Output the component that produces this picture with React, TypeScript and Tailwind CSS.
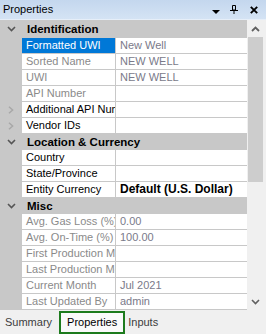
import React from "react";

type Row =
  | { kind: "cat"; label: string }
  | {
      kind: "row";
      label: string;
      value?: string;
      ro?: boolean;
      sel?: boolean;
      exp?: boolean;
      bold?: boolean;
    };

const rows: Row[] = [
  { kind: "cat", label: "Identification" },
  { kind: "row", label: "Formatted UWI", value: "New Well", sel: true },
  { kind: "row", label: "Sorted Name", value: "NEW WELL", ro: true },
  { kind: "row", label: "UWI", value: "NEW WELL", ro: true },
  { kind: "row", label: "API Number", ro: true },
  { kind: "row", label: "Additional API Number", exp: true },
  { kind: "row", label: "Vendor IDs", exp: true },
  { kind: "cat", label: "Location & Currency" },
  { kind: "row", label: "Country" },
  { kind: "row", label: "State/Province" },
  { kind: "row", label: "Entity Currency", value: "Default (U.S. Dollar)", bold: true },
  { kind: "cat", label: "Misc" },
  { kind: "row", label: "Avg. Gas Loss (%)", value: "0.00", ro: true },
  { kind: "row", label: "Avg. On-Time (%)", value: "100.00", ro: true },
  { kind: "row", label: "First Production Month", ro: true },
  { kind: "row", label: "Last Production Month", ro: true },
  { kind: "row", label: "Current Month", value: "Jul 2021", ro: true },
  { kind: "row", label: "Last Updated By", value: "admin", ro: true },
];

function ChevronDown({ color = "#555" }: { color?: string }) {
  return (
    <svg width="9" height="6" viewBox="0 0 9 6">
      <path d="M1 1 L4.5 4.5 L8 1" fill="none" stroke={color} strokeWidth="1.6" />
    </svg>
  );
}

function ChevronRight() {
  return (
    <svg width="6" height="8" viewBox="0 0 6 8">
      <path d="M1 0.8 L4.6 4 L1 7.2" fill="none" stroke="#a8a8a8" strokeWidth="1.5" />
    </svg>
  );
}

function ChevronUp({ color = "#606060" }: { color?: string }) {
  return (
    <svg width="9" height="6" viewBox="0 0 9 6">
      <path d="M1 5 L4.5 1.5 L8 5" fill="none" stroke={color} strokeWidth="1.8" />
    </svg>
  );
}

export default function App() {
  let first = true;
  return (
    <div className="w-[266px] h-[334px] flex flex-col bg-[#f0f0f0] overflow-hidden font-['Liberation_Sans',Arial,sans-serif] text-[11px] text-black">
      {/* title bar */}
      <div className="h-[19px] flex items-center bg-gradient-to-b from-[#c4d7ee] to-[#d4e3f4] pl-[3px]">
        <span className="leading-[19px]">Properties</span>
        <div className="ml-auto flex items-center">
          <svg width="8" height="4" viewBox="0 0 8 4" className="mt-[4px]">
            <path d="M0 0 H8 L4 4 Z" fill="#000" />
          </svg>
          <svg width="8" height="9" viewBox="0 0 8 9" className="ml-[10px]">
            <path d="M2.5 0.5 H5.5 V5 H2.5 Z" fill="none" stroke="#000" strokeWidth="1" />
            <path d="M0 5.5 H8" stroke="#000" strokeWidth="1" />
            <path d="M4 5.5 V9" stroke="#000" strokeWidth="1" />
          </svg>
          <svg width="8" height="8" viewBox="0 0 8 8" className="ml-[12px] mr-[8px]">
            <path d="M0.8 0.8 L7.2 7.2 M7.2 0.8 L0.8 7.2" stroke="#000" strokeWidth="1.9" />
          </svg>
        </div>
      </div>
      <div className="h-[1px] bg-[#e6eef8]" />
      {/* body */}
      <div className="flex h-[290px]">
        <div className="w-[247px] flex flex-col bg-white">
          {rows.map((r, i) => {
            if (r.kind === "cat") {
              const h = first ? "h-[18px]" : "h-[16px]";
              first = false;
              return (
                <div key={i} className={`${h} flex items-center bg-[#c8c8c8] shrink-0`}>
                  <div className="w-[22px] flex justify-center items-center pl-[1px]">
                    <ChevronDown />
                  </div>
                  <span className="pl-[5px] font-bold text-[11.5px] whitespace-nowrap leading-[15px]">
                    {r.label}
                  </span>
                </div>
              );
            }
            return (
              <div key={i} className="h-[16px] flex shrink-0">
                <div className="w-[22px] bg-[#c8c8c8] flex items-center justify-center pr-[1px]">
                  {r.exp ? <ChevronRight /> : null}
                </div>
                <div
                  className={`w-[94px] border-b border-r border-[#c8c8c8] pl-[4px] overflow-hidden whitespace-nowrap leading-[15px] ${
                    r.sel ? "bg-[#0078d7] text-white" : r.ro ? "text-[#8a8a8a]" : "text-black"
                  }`}
                >
                  {r.label}
                </div>
                <div
                  className={`flex-1 border-b border-[#c8c8c8] pl-[4px] overflow-hidden whitespace-nowrap leading-[15px] ${
                    r.bold ? "font-bold text-[12px] text-black" : "text-[#7a7a8a]"
                  }`}
                >
                  {r.value ?? ""}
                </div>
              </div>
            );
          })}
        </div>
        {/* scrollbar */}
        <div className="w-[17px] flex flex-col bg-[#f0f0f0]">
          <div className="h-[17px] flex items-center justify-center">
            <ChevronUp />
          </div>
          <div className="ml-[1px] w-[15px] h-[145px] bg-[#cdcdcd]" />
          <div className="flex-1" />
          <div className="h-[18px] flex items-center justify-center pt-[2px]">
            <ChevronDown color="#606060" />
          </div>
        </div>
        <div className="w-[2px] bg-[#f0f0f0]" />
      </div>
      {/* tab bar */}
      <div className="h-[24px] flex items-end bg-[#f0f0f0] text-[#3c3c3c]">
        <div className="h-[23px] flex items-center pl-[5px] pr-[7px]">Summary</div>
        <div className="h-[23px] flex items-center border-2 border-[#1d7b1d] bg-[#fafafa] px-[6px] text-black">
          Properties
        </div>
        <div className="h-[23px] flex items-center pl-[3px]">Inputs</div>
      </div>
    </div>
  );
}
